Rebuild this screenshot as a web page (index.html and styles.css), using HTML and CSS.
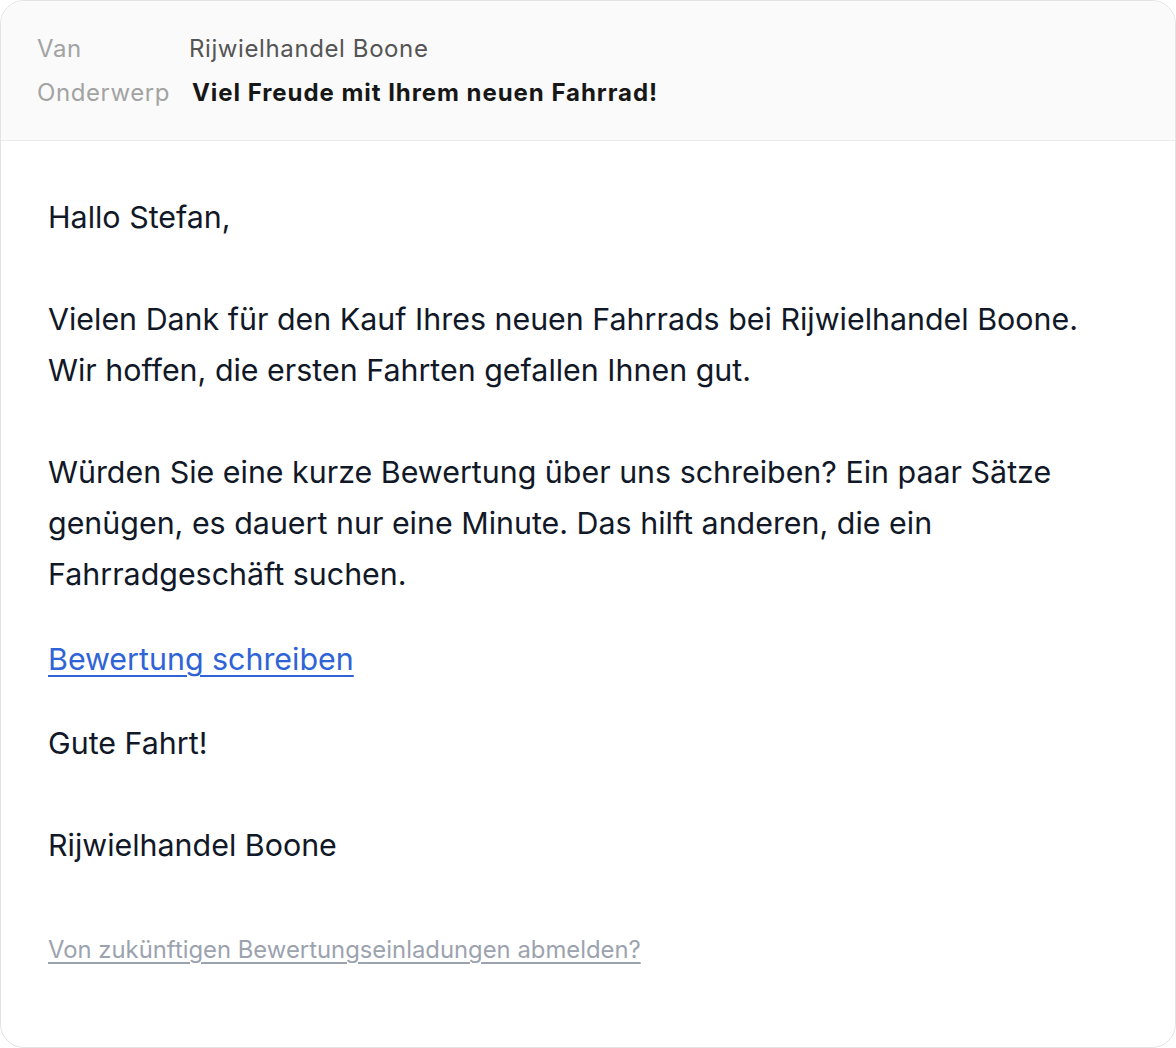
FILE: index.html
```html
<!DOCTYPE html>
<html lang="de">
<head>
<meta charset="utf-8">
<title>Viel Freude mit Ihrem neuen Fahrrad!</title>
<link rel="stylesheet" href="styles.css">
</head>
<body>
<div class="card">
  <header class="meta">
    <div class="row"><span class="label">Van</span><span class="from">Rijwielhandel Boone</span></div>
    <div class="row"><span class="label">Onderwerp</span><span class="subject">Viel Freude mit Ihrem neuen Fahrrad!</span></div>
  </header>
  <main class="body">
    <p class="para">Hallo Stefan,</p>
    <p class="para">Vielen Dank für den Kauf Ihres neuen Fahrrads bei Rijwielhandel Boone.<br>Wir hoffen, die ersten Fahrten gefallen Ihnen gut.</p>
    <p class="para">Würden Sie eine kurze Bewertung über uns schreiben? Ein paar Sätze<br>genügen, es dauert nur eine Minute. Das hilft anderen, die ein<br>Fahrradgeschäft suchen.</p>
    <p class="para cta"><a href="#" class="link">Bewertung schreiben</a></p>
    <p class="para greet">Gute Fahrt!</p>
    <p class="para">Rijwielhandel Boone</p>
    <p class="unsub"><a href="#" class="unsub-link">Von zukünftigen Bewertungseinladungen abmelden?</a></p>
  </main>
</div>
</body>
</html>
```
FILE: styles.css
```css
html, body {
  margin: 0;
  padding: 0;
  background: #ffffff;
}
body {
  font-family: Inter, "Noto Sans", "Liberation Sans", sans-serif;
}
.card {
  box-sizing: border-box;
  width: 1176px;
  height: 1048px;
  border: 1px solid #e3e3e3;
  border-radius: 24px;
  overflow: hidden;
  background: #ffffff;
}
.meta {
  background: #fafafa;
  border-bottom: 1px solid #ececec;
  padding: 26px 36px 25px;
}
.row {
  display: flex;
  align-items: baseline;
  height: 44px;
  line-height: 44px;
  font-size: 24px;
  letter-spacing: 0.6px;
}
.label {
  width: 152px;
  color: #a3a3a3;
}
.from {
  color: #555555;
}
.subject {
  color: #171717;
  font-weight: 700;
  padding-left: 3px;
  letter-spacing: 0.95px;
}
.body {
  padding: 51px 48px 0 47px;
  color: #111827;
  font-size: 30.4px;
  line-height: 51px;
}
.para {
  margin: 0 0 51px;
}
.para.cta {
  margin: -17px 0 33px;
}
.link {
  color: #2f64d6;
  text-decoration: underline;
  text-underline-offset: 5px;
  text-decoration-thickness: 2px;
}
.greet {
  margin-bottom: 51px;
}
.unsub {
  margin: 61px 0 0;
  font-size: 23.85px;
  line-height: 36px;
}
.unsub-link {
  color: #9ca3af;
  text-decoration: underline;
  text-underline-offset: 4px;
}
```
